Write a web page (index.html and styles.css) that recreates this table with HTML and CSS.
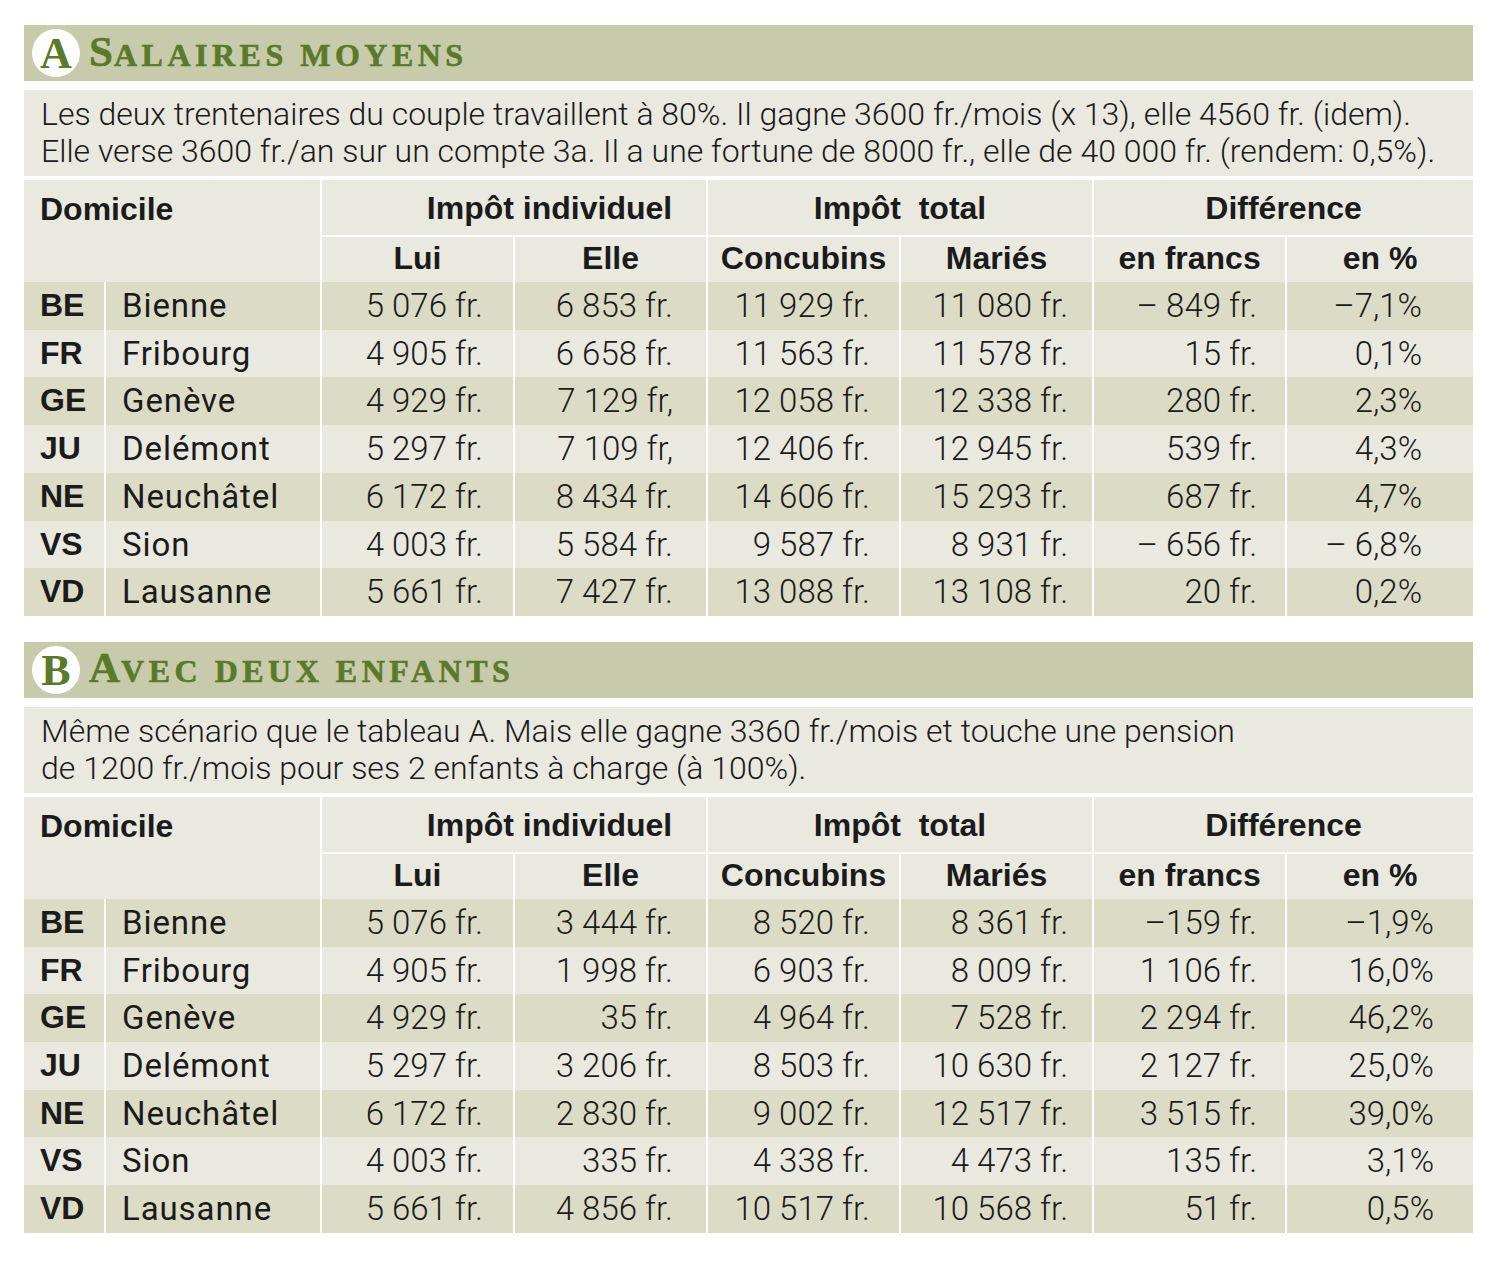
FILE: index.html
```html
<!DOCTYPE html>
<html lang="fr">
<head>
<meta charset="utf-8">
<title>Salaires moyens</title>
<link rel="stylesheet" href="styles.css">
</head>
<body>
<div class="page">
  <section class="section">
    <div class="bar">
      <span class="badge">A</span>
      <h2 class="title"><span class="cap">S</span><span class="sc">alaires moyens</span></h2>
    </div>
    <div class="intro">Les deux trentenaires du couple travaillent à 80%. Il gagne 3600 fr./mois (x 13), elle 4560 fr. (idem).<br>Elle verse 3600 fr./an sur un compte 3a. Il a une fortune de 8000 fr., elle de 40 000 fr. (rendem: 0,5%).</div>
    <table class="grid grid-a">
      <colgroup>
        <col class="c-code"><col class="c-city"><col class="c-num"><col class="c-num"><col class="c-num"><col class="c-num"><col class="c-num"><col class="c-pct">
      </colgroup>
      <thead>
        <tr class="h1">
          <th colspan="2" class="dom">Domicile</th>
          <th colspan="2" class="grp grp-ind">Impôt individuel</th>
          <th colspan="2" class="grp">Impôt&nbsp; total</th>
          <th colspan="2" class="grp">Différence</th>
        </tr>
        <tr class="h2">
          <th colspan="2" class="dom"></th>
          <th>Lui</th><th>Elle</th><th>Concubins</th><th>Mariés</th><th>en francs</th><th>en %</th>
        </tr>
      </thead>
      <tbody>
        <tr class="dark"><td class="code">BE</td><td class="city">Bienne</td><td class="n1">5 076 fr.</td><td class="n2">6 853 fr.</td><td class="n3">11 929 fr.</td><td class="n4">11 080 fr.</td><td class="n5">– 849 fr.</td><td class="n6">–7,1%</td></tr>
        <tr class="light"><td class="code">FR</td><td class="city">Fribourg</td><td class="n1">4 905 fr.</td><td class="n2">6 658 fr.</td><td class="n3">11 563 fr.</td><td class="n4">11 578 fr.</td><td class="n5">15 fr.</td><td class="n6">0,1%</td></tr>
        <tr class="dark"><td class="code">GE</td><td class="city">Genève</td><td class="n1">4 929 fr.</td><td class="n2">7 129 fr,</td><td class="n3">12 058 fr.</td><td class="n4">12 338 fr.</td><td class="n5">280 fr.</td><td class="n6">2,3%</td></tr>
        <tr class="light"><td class="code">JU</td><td class="city">Delémont</td><td class="n1">5 297 fr.</td><td class="n2">7 109 fr,</td><td class="n3">12 406 fr.</td><td class="n4">12 945 fr.</td><td class="n5">539 fr.</td><td class="n6">4,3%</td></tr>
        <tr class="dark"><td class="code">NE</td><td class="city">Neuchâtel</td><td class="n1">6 172 fr.</td><td class="n2">8 434 fr.</td><td class="n3">14 606 fr.</td><td class="n4">15 293 fr.</td><td class="n5">687 fr.</td><td class="n6">4,7%</td></tr>
        <tr class="light"><td class="code">VS</td><td class="city">Sion</td><td class="n1">4 003 fr.</td><td class="n2">5 584 fr.</td><td class="n3">9 587 fr.</td><td class="n4">8 931 fr.</td><td class="n5">– 656 fr.</td><td class="n6">– 6,8%</td></tr>
        <tr class="dark"><td class="code">VD</td><td class="city">Lausanne</td><td class="n1">5 661 fr.</td><td class="n2">7 427 fr.</td><td class="n3">13 088 fr.</td><td class="n4">13 108 fr.</td><td class="n5">20 fr.</td><td class="n6">0,2%</td></tr>
      </tbody>
    </table>
  </section>

  <section class="section">
    <div class="bar">
      <span class="badge">B</span>
      <h2 class="title"><span class="cap">A</span><span class="sc">vec deux enfants</span></h2>
    </div>
    <div class="intro">Même scénario que le tableau A. Mais elle gagne 3360 fr./mois et touche une pension<br>de 1200 fr./mois pour ses 2 enfants à charge (à 100%).</div>
    <table class="grid grid-b">
      <colgroup>
        <col class="c-code"><col class="c-city"><col class="c-num"><col class="c-num"><col class="c-num"><col class="c-num"><col class="c-num"><col class="c-pct">
      </colgroup>
      <thead>
        <tr class="h1">
          <th colspan="2" class="dom">Domicile</th>
          <th colspan="2" class="grp grp-ind">Impôt individuel</th>
          <th colspan="2" class="grp">Impôt&nbsp; total</th>
          <th colspan="2" class="grp">Différence</th>
        </tr>
        <tr class="h2">
          <th colspan="2" class="dom"></th>
          <th>Lui</th><th>Elle</th><th>Concubins</th><th>Mariés</th><th>en francs</th><th>en %</th>
        </tr>
      </thead>
      <tbody>
        <tr class="dark"><td class="code">BE</td><td class="city">Bienne</td><td class="n1">5 076 fr.</td><td class="n2">3 444 fr.</td><td class="n3">8 520 fr.</td><td class="n4">8 361 fr.</td><td class="n5">–159 fr.</td><td class="n6">–1,9%</td></tr>
        <tr class="light"><td class="code">FR</td><td class="city">Fribourg</td><td class="n1">4 905 fr.</td><td class="n2">1 998 fr.</td><td class="n3">6 903 fr.</td><td class="n4">8 009 fr.</td><td class="n5">1 106 fr.</td><td class="n6">16,0%</td></tr>
        <tr class="dark"><td class="code">GE</td><td class="city">Genève</td><td class="n1">4 929 fr.</td><td class="n2">35 fr.</td><td class="n3">4 964 fr.</td><td class="n4">7 528 fr.</td><td class="n5">2 294 fr.</td><td class="n6">46,2%</td></tr>
        <tr class="light"><td class="code">JU</td><td class="city">Delémont</td><td class="n1">5 297 fr.</td><td class="n2">3 206 fr.</td><td class="n3">8 503 fr.</td><td class="n4">10 630 fr.</td><td class="n5">2 127 fr.</td><td class="n6">25,0%</td></tr>
        <tr class="dark"><td class="code">NE</td><td class="city">Neuchâtel</td><td class="n1">6 172 fr.</td><td class="n2">2 830 fr.</td><td class="n3">9 002 fr.</td><td class="n4">12 517 fr.</td><td class="n5">3 515 fr.</td><td class="n6">39,0%</td></tr>
        <tr class="light"><td class="code">VS</td><td class="city">Sion</td><td class="n1">4 003 fr.</td><td class="n2">335 fr.</td><td class="n3">4 338 fr.</td><td class="n4">4 473 fr.</td><td class="n5">135 fr.</td><td class="n6">3,1%</td></tr>
        <tr class="dark"><td class="code">VD</td><td class="city">Lausanne</td><td class="n1">5 661 fr.</td><td class="n2">4 856 fr.</td><td class="n3">10 517 fr.</td><td class="n4">10 568 fr.</td><td class="n5">51 fr.</td><td class="n6">0,5%</td></tr>
      </tbody>
    </table>
  </section>
</div>
</body>
</html>
```

FILE: styles.css
```css
html, body {
  margin: 0;
  padding: 0;
  background: #ffffff;
}

.page {
  padding: 25px 0 0 24px;
  width: 1449px;
  color: #1b1b1b;
  font-family: Roboto, "Liberation Sans", Arial, sans-serif;
}

.section + .section {
  margin-top: 26px;
}

/* ---------- title bar ---------- */
.bar {
  height: 56px;
  background: #c8caac;
  display: flex;
  align-items: center;
  padding-left: 8px;
  gap: 9px;
}

.badge {
  width: 48px;
  height: 48px;
  flex: none;
  border-radius: 50%;
  background: #ffffff;
  color: #5a7a29;
  font-family: "Liberation Serif", "Times New Roman", serif;
  font-weight: bold;
  font-size: 44px;
  line-height: 50px;
  text-align: center;
}

.title {
  margin: 0;
  color: #5a7a29;
  font-family: "Liberation Serif", "Times New Roman", serif;
  font-weight: bold;
  font-size: 43px;
  line-height: 50px;
  letter-spacing: 1px;
  white-space: nowrap;
  -webkit-text-stroke: 0.6px #5a7a29;
}

.title .sc {
  font-size: 32px;
  text-transform: uppercase;
  letter-spacing: 4.5px;
}

/* ---------- intro text ---------- */
.intro {
  margin-top: 9px;
  height: 86px;
  box-sizing: border-box;
  padding: 6px 17px 0;
  background: #e9e9e0;
  font-weight: 300;
  font-size: 32px;
  line-height: 37px;
  white-space: nowrap;
}

/* ---------- tables ---------- */
.grid {
  margin-top: 4px;
  width: 1449px;
  table-layout: fixed;
  border-collapse: separate;
  border-spacing: 0;
  font-size: 33px;
}

.c-code { width: 80px; }
.c-city { width: 216px; }
.c-num  { width: 193px; }
.c-pct  { width: 188px; }

.grid th,
.grid td {
  padding: 0;
  white-space: nowrap;
  box-sizing: border-box;
  border-left: 2px solid #ffffff;
}

.grid th:first-child,
.grid td:first-child {
  border-left: 0;
}

.grid th {
  background: #e9e9e0;
  font-family: "Liberation Sans", Arial, sans-serif;
  font-size: 32px;
  font-weight: bold;
  text-align: center;
  vertical-align: middle;
}

.grid .h1 th {
  height: 57px;
  line-height: 52px;
  padding-top: 1px;
  border-bottom: 2px solid #ffffff;
}

.grid .h1 th.dom,
.grid .h2 th.dom {
  border-bottom: 0;
  text-align: left;
  padding-left: 16px;
}

.grid .h1 th.grp-ind {
  padding-left: 71px;
}

.grid .h2 th {
  height: 45px;
  line-height: 42px;
  padding-bottom: 3px;
}

.grid td {
  height: 47.7px;
  line-height: 47.7px;
  font-weight: 300;
  text-align: right;
  vertical-align: middle;
}

.grid .dark td { background: #dcdcc6; }
.grid .light td { background: #e9e9e0; }

.grid td.code {
  text-align: left;
  padding-left: 16px;
  font-family: "Liberation Sans", Arial, sans-serif;
  font-size: 32px;
  font-weight: bold;
}

.grid td.city {
  text-align: left;
  padding-left: 16px;
  font-weight: 400;
  letter-spacing: 0.9px;
}

.grid td.n1 { padding-right: 30px; }
.grid td.n2 { padding-right: 33px; }
.grid td.n3 { padding-right: 29px; }
.grid td.n4 { padding-right: 24px; }
.grid td.n5 { padding-right: 28px; }
.grid-a td.n6 { padding-right: 51px; }
.grid-b td.n6 { padding-right: 39px; }
```
